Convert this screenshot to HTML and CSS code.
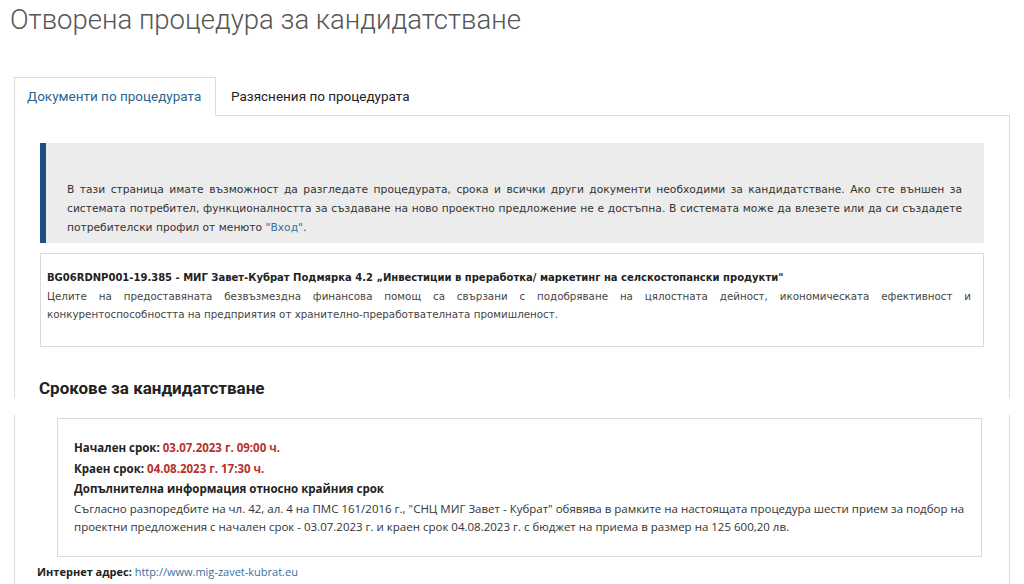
FILE: index.html
```html
<!DOCTYPE html>
<html lang="bg">
<head>
<meta charset="utf-8">
<title>Отворена процедура за кандидатстване</title>
<link rel="stylesheet" href="styles.css">
</head>
<body>
<h1 class="page-title">Отворена процедура за кандидатстване</h1>
<div class="tabs-wrap">
  <div class="tab-bar">
    <div class="tab tab-active">Документи по процедурата</div>
    <div class="tab">Разяснения по процедурата</div>
  </div>
  <div class="panel panel-top">
    <div class="info-box">
      <p>В тази страница имате възможност да разгледате процедурата, срока и всички други документи необходими за кандидатстване. Ако сте външен за системата потребител, функционалността за създаване на ново проектно предложение не е достъпна. В системата може да влезете или да си създадете потребителски профил от менюто <a class="link" href="#">"Вход"</a>.</p>
    </div>
    <div class="desc-box">
      <div class="desc-title">BG06RDNP001-19.385 - МИГ Завет-Кубрат Подмярка 4.2 „Инвестиции в преработка/ маркетинг на селскостопански продукти"</div>
      <p class="desc-text">Целите на предоставяната безвъзмездна финансова помощ са свързани с подобряване на цялостната дейност, икономическата ефективност и конкурентоспособността на предприятия от хранително-преработвателната промишленост.</p>
    </div>
    <h2 class="section-title">Срокове за кандидатстване</h2>
  </div>
  <div class="panel panel-bottom">
    <div class="deadline-box">
      <div class="dl-row"><b>Начален срок:</b> <span class="date">03.07.2023 г. 09:00 ч.</span></div>
      <div class="dl-row"><b>Краен срок:</b> <span class="date">04.08.2023 г. 17:30 ч.</span></div>
      <div class="dl-row"><b>Допълнителна информация относно крайния срок</b></div>
      <p class="dl-text">Съгласно разпоредбите на чл. 42, ал. 4 на ПМС 161/2016 г., "СНЦ МИГ Завет - Кубрат" обявява в рамките на настоящата процедура шести прием за подбор на проектни предложения с начален срок - 03.07.2023 г. и краен срок 04.08.2023 г. с бюджет на приема в размер на 125 600,20 лв.</p>
    </div>
    <div class="web-row"><b>Интернет адрес:</b> <a class="link" href="#">http://www.mig-zavet-kubrat.eu</a></div>
  </div>
</div>
</body>
</html>
```
FILE: styles.css
```css
html, body {
  margin: 0;
  padding: 0;
  background: #ffffff;
}
body {
  font-family: "DejaVu Sans", Verdana, sans-serif;
  color: #333;
  overflow: hidden;
}
.page-title {
  margin: 0;
  padding-left: 10px;
  font-family: Roboto, "Noto Sans", sans-serif;
  font-weight: 300;
  font-size: 27.5px;
  line-height: 40px;
  color: #555;
}
.tabs-wrap {
  margin: 37px 14px 0 14px;
}
.tab-bar {
  display: flex;
  border-bottom: 1px solid #dcdcdc;
  height: 38px;
}
.tab {
  font-family: Roboto, "Noto Sans", sans-serif;
  font-size: 13.5px;
  line-height: 38px;
  color: #222;
  padding: 0 15px;
}
.tab-active {
  padding: 0 0 0 12px;
  border: 1px solid #dcdcdc;
  border-bottom: 1px solid #fff;
  margin-bottom: -1px;
  background: #fff;
  color: #2d6690;
  line-height: 36px;
  height: 39px;
  box-sizing: border-box;
  width: 202px;
}
.panel {
  border-left: 1px solid #dcdcdc;
  border-right: 1px solid #dcdcdc;
}
.panel-top {
  padding: 27px 25px 0 25px;
  height: 282px;
  box-sizing: border-box;
}
.info-box {
  background: #ececec;
  border-left: 6px solid #1d4e86;
  height: 100px;
  box-sizing: border-box;
  padding: 37px 22px 0 21px;
}
.info-box p {
  margin: 0;
  font-size: 10.7px;
  line-height: 19px;
  text-align: justify;
  color: #333;
}
.link {
  color: #3b6fa0;
  text-decoration: none;
}
.desc-box {
  margin-top: 10px;
  height: 94px;
  box-sizing: border-box;
  border: 1px solid #dadada;
  padding: 14px 12px 0 6px;
}
.desc-title {
  font-size: 10px;
  font-weight: bold;
  line-height: 19px;
  color: #222;
}
.desc-text {
  margin: 0;
  font-size: 10.3px;
  line-height: 18px;
  text-align: justify;
  color: #444;
}
.section-title {
  margin: 31px 0 0 -1px;
  font-family: Roboto, "Noto Sans", sans-serif;
  font-size: 17px;
  font-weight: bold;
  line-height: 20px;
  color: #222;
}
.panel-bottom {
  margin-top: 17px;
  padding: 3px 0 0 22px;
  height: 169px;
  box-sizing: border-box;
}
.deadline-box {
  margin: 0 27px 0 20px;
  height: 139px;
  box-sizing: border-box;
  border: 1px solid #dadada;
  padding: 19px 4px 0 16px;
  font-family: "Open Sans", "Noto Sans", sans-serif;
  font-size: 11.5px;
  color: #333;
}
.dl-row {
  line-height: 20.5px;
}
.dl-row b {
  color: #222;
}
.date {
  color: #b8312b;
  font-weight: bold;
}
.dl-text {
  margin: 0;
  line-height: 18px;
}
.web-row {
  margin-top: 6px;
  font-family: "Open Sans", "Noto Sans", sans-serif;
  font-size: 11px;
  line-height: 18px;
  color: #222;
}
```
